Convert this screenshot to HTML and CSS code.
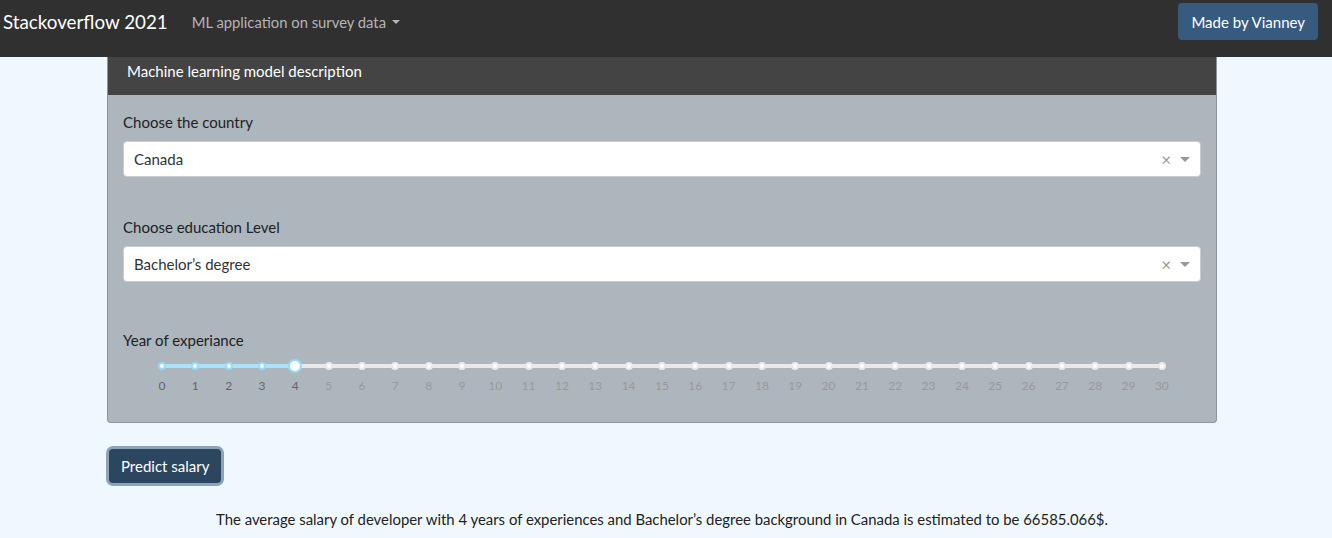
FILE: index.html
```html
<!DOCTYPE html>
<html>
<head>
<meta charset="utf-8">
<link rel="stylesheet" href="styles.css">
</head>
<body>
<nav class="navbar">
  <div class="nav-left">
    <span class="brand">Stackoverflow 2021</span>
    <span class="nav-dd">ML application on survey data <span class="caret"></span></span>
  </div>
  <button class="made-by">Made by Vianney</button>
</nav>
<main class="main">
  <section class="card">
    <div class="card-header">Machine learning model description</div>
    <div class="card-body">
      <div class="field">
        <label class="label">Choose the country</label>
        <div class="select"><span class="value">Canada</span><span class="clear">×</span><span class="arrow"></span></div>
      </div>
      <div class="field">
        <label class="label">Choose education Level</label>
        <div class="select"><span class="value">Bachelor’s degree</span><span class="clear">×</span><span class="arrow"></span></div>
      </div>
      <div class="field field-slider">
        <label class="label">Year of experiance</label>
        <div class="slider">
          <div class="rail"><div class="fill" style="width:13.333%"></div></div>
          <div class="marks" id="marks"></div>
        </div>
      </div>
    </div>
  </section>
  <button class="predict">Predict salary</button>
  <p class="result">The average salary of developer with 4 years of experiences and Bachelor’s degree background in Canada is estimated to be 66585.066$.</p>
</main>
<script>
  var m = document.getElementById('marks');
  for (var i = 0; i <= 30; i++) {
    var d = document.createElement('div');
    d.className = 'mark' + (i <= 4 ? ' on' : '') + (i === 4 ? ' handle' : '');
    d.innerHTML = '<span class="dot"></span><span class="num">' + i + '</span>';
    m.appendChild(d);
  }
</script>
</body>
</html>
```
FILE: styles.css
```css
* { box-sizing: border-box; }
html, body { margin: 0; padding: 0; }
body {
  background: #f0f8ff;
  font-family: Lato, "Open Sans", sans-serif;
  font-size: 15px;
  color: #222;
  width: 1332px;
  height: 538px;
  overflow: hidden;
}
.navbar {
  height: 57px;
  background: #303030;
  display: flex;
  justify-content: space-between;
  align-items: flex-start;
  padding: 3px 13px 0 3px;
}
.nav-left {
  display: flex;
  align-items: center;
  height: 37px;
}
.brand {
  color: #fff;
  font-size: 18.8px;
  margin-right: 24px;
}
.nav-dd {
  color: #b5b5b5;
  font-size: 14.8px;
  display: flex;
  align-items: center;
}
.caret {
  display: inline-block;
  width: 0; height: 0;
  border-left: 4.5px solid transparent;
  border-right: 4.5px solid transparent;
  border-top: 4.5px solid #b5b5b5;
  margin-left: 6px;
  margin-top: 1px;
}
.made-by {
  background: #375a7f;
  color: #fff;
  border: none;
  border-radius: 4px;
  font-family: inherit;
  font-size: 15px;
  height: 37px;
  padding: 0 13px;
  margin-right: 1px;
}
.main {
  padding-left: 107px;
  width: 1217px;
}
.card {
  border: 1px solid #8e949a;
  border-top: none;
  border-radius: 0 0 4px 4px;
  background: #adb5bd;
  overflow: hidden;
}
.card-header {
  background: #444;
  color: #fff;
  height: 38px;
  display: flex;
  align-items: flex-start;
  padding: 4px 19px 0;
  line-height: 20px;
  font-size: 15px;
}
.card-body {
  padding: 16px 15px 0 15px;
  height: 327px;
}
.field { margin-bottom: 39px; }
.label {
  display: block;
  line-height: 22px;
  margin-bottom: 8px;
  color: #222;
}
.select {
  height: 36px;
  background: #fff;
  border-radius: 4px;
  border: 1px solid #ccc;
  display: flex;
  align-items: center;
  padding: 0 10px;
}
.value { flex: 1; color: #333; }
.clear {
  color: #999;
  font-size: 17px;
  margin-right: 9px;
  line-height: 1;
}
.arrow {
  width: 0; height: 0;
  border-left: 5px solid transparent;
  border-right: 5px solid transparent;
  border-top: 5px solid #999;
}
.field-slider { padding-top: 8px; }
.field-slider .label { margin-bottom: 0; }
.slider {
  position: relative;
  margin: 0 39px;
  height: 40px;
}
.rail {
  position: absolute;
  left: 0; right: 0; top: 13px;
  height: 4px;
  background: #e9e9e9;
  border-radius: 2px;
}
.fill {
  height: 4px;
  background: #abe2fb;
  border-radius: 2px;
}
.marks {
  position: absolute;
  left: 0; right: 0; top: 0;
  display: flex;
  justify-content: space-between;
}
.mark {
  width: 0;
  display: flex;
  flex-direction: column;
  align-items: center;
}
.dot {
  margin-top: 11px;
  flex: none;
  width: 8px; height: 8px;
  border-radius: 50%;
  background: #fff;
  border: 2px solid #e9e9e9;
}
.mark.on .dot { border-color: #96dbfa; }
.mark.handle .dot {
  margin-top: 8px;
  width: 14px; height: 14px;
  border: 2px solid #96dbfa;
}
.mark.handle .num { margin-top: 6px; }
.num {
  margin-top: 9px;
  font-size: 12px;
  color: #999;
  line-height: 14px;
  white-space: nowrap;
}
.mark.on .num { color: #666; }
.predict {
  margin-top: 26px;
  background: #2c4660;
  color: #fff;
  font-family: inherit;
  font-size: 15px;
  border: none;
  border-radius: 4px;
  height: 34px;
  padding: 0 12px;
  box-shadow: 0 0 0 3px #8ea3b7;
  margin-left: 2px;
}
.result {
  text-align: center;
  margin: 27px 0 0 0;
  color: #222;
  font-size: 14.9px;
}
```
